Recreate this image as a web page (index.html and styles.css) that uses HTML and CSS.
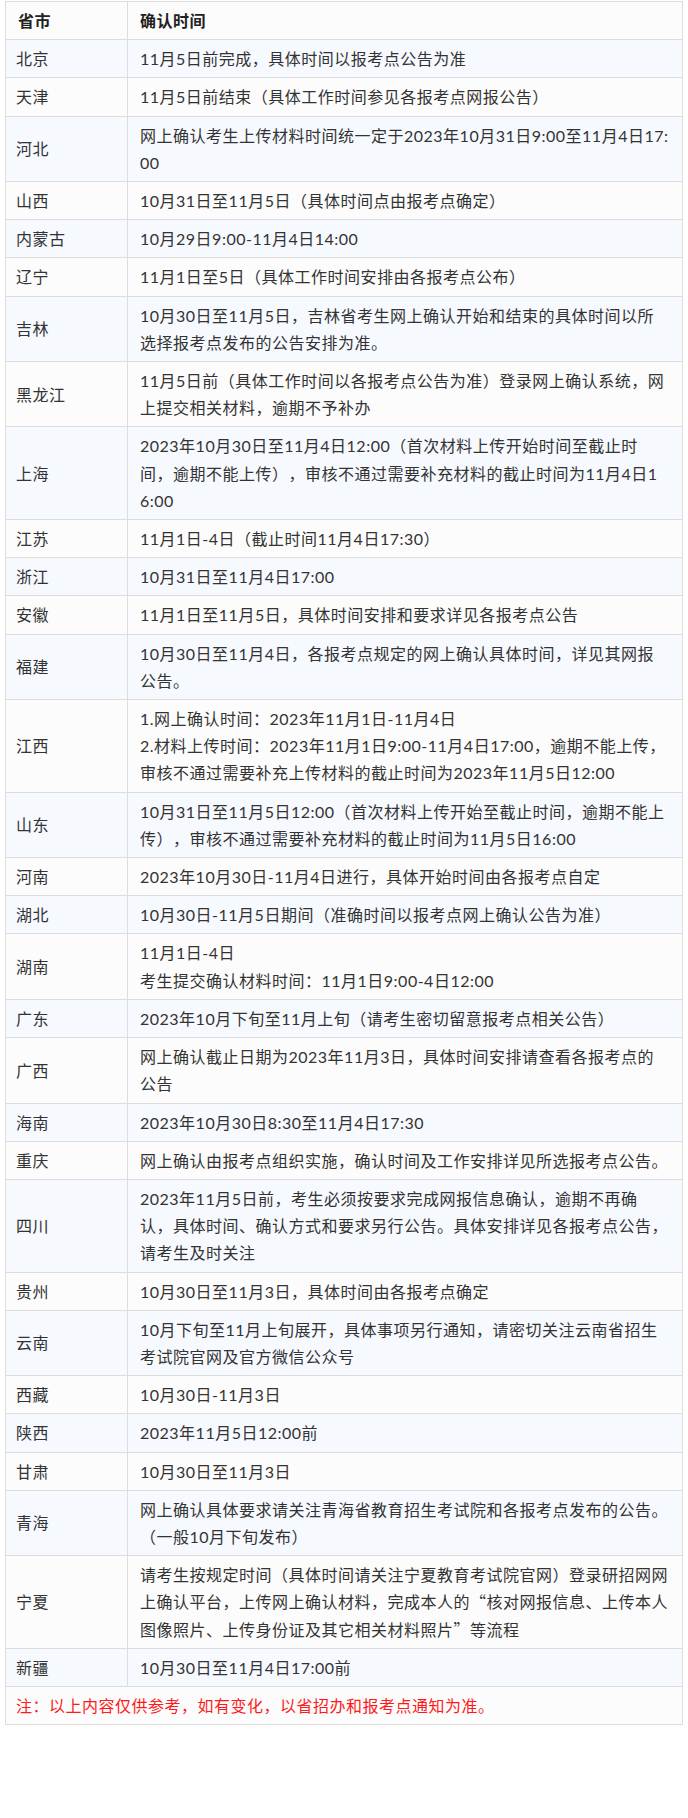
FILE: index.html
```html
<!DOCTYPE html>
<html lang="zh-CN">
<head>
<meta charset="utf-8">
<title>确认时间</title>
<link rel="stylesheet" href="styles.css">
</head>
<body>
<table class="tbl">
  <colgroup><col class="c1"><col class="c2"></colgroup>
  <tr class="even"><th>省市</th><th>确认时间</th></tr>
  <tr class="odd"><td class="prov">北京</td><td>11月5日前完成，具体时间以报考点公告为准</td></tr>
  <tr class="even"><td class="prov">天津</td><td>11月5日前结束（具体工作时间参见各报考点网报公告）</td></tr>
  <tr class="odd"><td class="prov">河北</td><td>网上确认考生上传材料时间统一定于2023年10月31日9:00至11月4日17:00</td></tr>
  <tr class="even"><td class="prov">山西</td><td>10月31日至11月5日（具体时间点由报考点确定）</td></tr>
  <tr class="odd"><td class="prov">内蒙古</td><td>10月29日9:00-11月4日14:00</td></tr>
  <tr class="even"><td class="prov">辽宁</td><td>11月1日至5日（具体工作时间安排由各报考点公布）</td></tr>
  <tr class="odd"><td class="prov">吉林</td><td>10月30日至11月5日，吉林省考生网上确认开始和结束的具体时间以所选择报考点发布的公告安排为准。</td></tr>
  <tr class="even"><td class="prov">黑龙江</td><td>11月5日前（具体工作时间以各报考点公告为准）登录网上确认系统，网上提交相关材料，逾期不予补办</td></tr>
  <tr class="odd"><td class="prov">上海</td><td>2023年10月30日至11月4日12:00（首次材料上传开始时间至截止时间，逾期不能上传），审核不通过需要补充材料的截止时间为11月4日16:00</td></tr>
  <tr class="even"><td class="prov">江苏</td><td>11月1日-4日（截止时间11月4日17:30）</td></tr>
  <tr class="odd"><td class="prov">浙江</td><td>10月31日至11月4日17:00</td></tr>
  <tr class="even"><td class="prov">安徽</td><td>11月1日至11月5日，具体时间安排和要求详见各报考点公告</td></tr>
  <tr class="odd"><td class="prov">福建</td><td>10月30日至11月4日，各报考点规定的网上确认具体时间，详见其网报公告。</td></tr>
  <tr class="even"><td class="prov">江西</td><td>1.网上确认时间：2023年11月1日-11月4日<br>2.材料上传时间：2023年11月1日9:00-11月4日17:00，逾期不能上传，审核不通过需要补充上传材料的截止时间为2023年11月5日12:00</td></tr>
  <tr class="odd"><td class="prov">山东</td><td>10月31日至11月5日12:00（首次材料上传开始至截止时间，逾期不能上传），审核不通过需要补充材料的截止时间为11月5日16:00</td></tr>
  <tr class="even"><td class="prov">河南</td><td>2023年10月30日-11月4日进行，具体开始时间由各报考点自定</td></tr>
  <tr class="odd"><td class="prov">湖北</td><td>10月30日-11月5日期间（准确时间以报考点网上确认公告为准）</td></tr>
  <tr class="even"><td class="prov">湖南</td><td>11月1日-4日<br>考生提交确认材料时间：11月1日9:00-4日12:00</td></tr>
  <tr class="odd"><td class="prov">广东</td><td>2023年10月下旬至11月上旬（请考生密切留意报考点相关公告）</td></tr>
  <tr class="even"><td class="prov">广西</td><td>网上确认截止日期为2023年11月3日，具体时间安排请查看各报考点的公告</td></tr>
  <tr class="odd"><td class="prov">海南</td><td>2023年10月30日8:30至11月4日17:30</td></tr>
  <tr class="even"><td class="prov">重庆</td><td>网上确认由报考点组织实施，确认时间及工作安排详见所选报考点公告。</td></tr>
  <tr class="odd"><td class="prov">四川</td><td>2023年11月5日前，考生必须按要求完成网报信息确认，逾期不再确认，具体时间、确认方式和要求另行公告。具体安排详见各报考点公告，请考生及时关注</td></tr>
  <tr class="even"><td class="prov">贵州</td><td>10月30日至11月3日，具体时间由各报考点确定</td></tr>
  <tr class="odd"><td class="prov">云南</td><td>10月下旬至11月上旬展开，具体事项另行通知，请密切关注云南省招生考试院官网及官方微信公众号</td></tr>
  <tr class="even"><td class="prov">西藏</td><td>10月30日-11月3日</td></tr>
  <tr class="odd"><td class="prov">陕西</td><td>2023年11月5日12:00前</td></tr>
  <tr class="even"><td class="prov">甘肃</td><td>10月30日至11月3日</td></tr>
  <tr class="odd"><td class="prov">青海</td><td>网上确认具体要求请关注青海省教育招生考试院和各报考点发布的公告。（一般10月下旬发布）</td></tr>
  <tr class="even"><td class="prov">宁夏</td><td class="cjk">请考生按规定时间（具体时间请关注宁夏教育考试院官网）登录研招网网上确认平台，上传网上确认材料，完成本人的“核对网报信息、上传本人图像照片、上传身份证及其它相关材料照片”等流程</td></tr>
  <tr class="odd"><td class="prov">新疆</td><td>10月30日至11月4日17:00前</td></tr>
  <tr class="even"><td class="note" colspan="2">注：以上内容仅供参考，如有变化，以省招办和报考点通知为准。</td></tr>
</table>
</body>
</html>
```

FILE: styles.css
```css
html, body {
  margin: 0;
  padding: 0;
  background: #ffffff;
}

body {
  font-family: "Lato", "Noto Sans CJK SC", sans-serif;
  font-size: 16px;
  color: #333333;
}

.tbl {
  border-collapse: collapse;
  table-layout: fixed;
  width: 677px;
  margin: 1px 0 0 5px;
  letter-spacing: 0.5px;
  text-spacing-trim: space-all;
}

.c1 { width: 122px; }
.c2 { width: 555px; }

.tbl th,
.tbl td {
  border: 1px solid #dddddd;
  padding: 5px 12px 5px 12px;
  line-height: 27.2px;
  text-align: left;
  vertical-align: middle;
  word-break: break-all;
}

.tbl th {
  font-weight: bold;
  color: #222222;
}

.tbl .prov {
  padding-left: 10px;
}

.tbl .cjk {
  font-family: "Noto Sans CJK SC", sans-serif;
}

.even { background: #fcfcfc; }
.odd { background: #f6f9fe; }

.tbl .note {
  color: #ff1a1a;
  padding-left: 10px;
}
```
